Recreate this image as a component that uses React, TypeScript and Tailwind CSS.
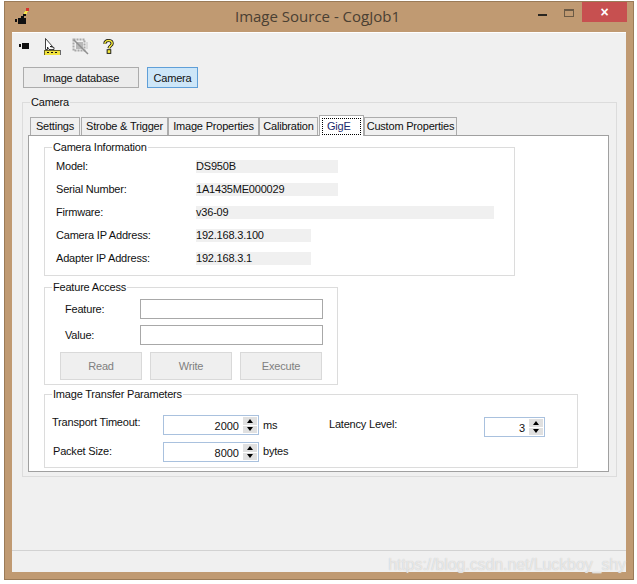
import React from "react";

const font = { fontFamily: '"Liberation Sans", Arial, sans-serif' };

const Group = ({ title, className, children }: { title: string; className: string; children: React.ReactNode }) => (
  <fieldset className={`border border-[#dcdcdc] ${className}`}>
    <legend className="ml-[7px] px-[1px] text-[11px] leading-[13px] text-[#111]">{title}</legend>
    {children}
  </fieldset>
);

const InfoRow = ({ label, value, barWidth }: { label: string; value: string; barWidth: string }) => (
  <div className="flex items-center h-[23px]">
    <div className="w-[151px] pl-[11px] text-[11px] text-[#111]">{label}</div>
    <div className={`h-[13px] bg-[#f0f0f0] text-[11px] leading-[13px] text-[#111] ${barWidth}`}>{value}</div>
  </div>
);

const Spin = ({ value, width }: { value: string; width: string }) => (
  <div className={`flex h-[20px] border border-[#a9c1de] bg-white ${width}`}>
    <div className="flex-1 pr-[4px] pt-[1px] text-right text-[11px] leading-[18px] tracking-normal text-[#111]">{value}</div>
    <div className="flex w-[15px] flex-col gap-[1px] p-[1px] pl-0">
      <div className="flex flex-1 items-center justify-center bg-[#e0e0e0]">
        <div className="h-0 w-0 border-x-[3.5px] border-b-[4px] border-x-transparent border-b-black" />
      </div>
      <div className="flex flex-1 items-center justify-center bg-[#e0e0e0]">
        <div className="h-0 w-0 border-x-[3.5px] border-t-[4px] border-x-transparent border-t-black" />
      </div>
    </div>
  </div>
);

const TabItem = ({ label, width }: { label: string; width: string }) => (
  <div className={`flex h-[18px] items-center justify-center whitespace-nowrap border border-b-0 border-[#acacac] bg-[#f0f0f0] text-[11px] text-[#111] ${width}`}>
    {label}
  </div>
);

const DisabledButton = ({ label }: { label: string }) => (
  <div className="flex h-[28px] w-[82px] items-center justify-center border border-[#d9d9d9] bg-[#efefef] text-[11px] text-[#808080]">
    {label}
  </div>
);

const TitleIcon = () => (
  <svg width="17" height="17" viewBox="0 0 17 17" shapeRendering="crispEdges">
    <rect x="0" y="11" width="2" height="3" fill="#111" />
    <rect x="3" y="10" width="8" height="6" fill="#111" />
    <rect x="6" y="8" width="3" height="3" fill="#111" />
    <rect x="8" y="6" width="3" height="2" fill="#111" />
    <rect x="9" y="4" width="3" height="2" fill="#f4e24a" />
    <rect x="10" y="3" width="3" height="1" fill="#f4e24a" />
    <rect x="11" y="0" width="3" height="3" fill="#d8322c" />
  </svg>
);

const CameraIcon = () => (
  <svg width="10" height="6" viewBox="0 0 10 6" shapeRendering="crispEdges">
    <rect x="0" y="1" width="2" height="3" fill="#111" />
    <rect x="3" y="0" width="7" height="6" fill="#111" />
  </svg>
);

const CursorRulerIcon = () => (
  <svg width="17" height="17" viewBox="0 0 17 17" shapeRendering="crispEdges">
    <path d="M1.5 0.5V11.5H3.5V9L5 11.5H10V9.5L6 8.5H8.5Z" fill="#fff" stroke="#111" strokeWidth="0.8" shapeRendering="auto" />
    <rect x="0" y="12" width="16" height="5" fill="#f2e33c" stroke="#111" strokeWidth="0.6" />
    <rect x="3" y="14" width="2" height="1" fill="#111" />
    <rect x="7" y="14" width="2" height="1" fill="#111" />
    <rect x="11" y="14" width="2" height="1" fill="#111" />
  </svg>
);

const CropIcon = () => (
  <svg width="17" height="17" viewBox="0 0 17 17">
    <rect x="1.5" y="1.5" width="11" height="11" fill="none" stroke="#a8a8a8" strokeWidth="2" strokeDasharray="2 1" />
    <rect x="4" y="4" width="7" height="7" fill="#b8b8b8" />
    <path d="M2 2L16 16" stroke="#8f8f8f" strokeWidth="1.5" />
    <path d="M15 4V11" stroke="#c4c4c4" strokeWidth="1" />
  </svg>
);

const HelpIcon = () => (
  <svg width="11" height="15" viewBox="0 0 12 16">
    <path d="M2 5C2 2.5 4 1.5 6 1.5C8 1.5 10 2.5 10 4.8C10 7 7 7 6.5 10" fill="none" stroke="#111" strokeWidth="3.4" />
    <path d="M2 5C2 2.5 4 1.5 6 1.5C8 1.5 10 2.5 10 4.8C10 7 7 7 6.5 10" fill="none" stroke="#f5e93a" strokeWidth="1.6" />
    <rect x="4.5" y="11.5" width="4" height="4" fill="#f5e93a" stroke="#111" />
  </svg>
);

export default function App() {
  return (
    <div className="h-[584px] w-[637px] overflow-hidden bg-white pl-[4px] pt-[1px] tracking-[-0.2px]" style={font}>
      <div className="flex h-[579px] w-[630px] flex-col border border-[#9b7b58] bg-[#c09a72] px-[7px] pb-[7px]">
        {/* title bar */}
        <div className="grid h-[30px] shrink-0 grid-cols-[1fr_auto_1fr] -mx-[7px]">
          <div className="pl-[10px] pt-[6px]">
            <TitleIcon />
          </div>
          <div
            className="pt-[3px] pr-[3px] text-[15px] leading-[22px] tracking-normal text-[#4a4033]"
            style={{ fontFamily: '"Open Sans", sans-serif' }}
          >
            Image Source - CogJob1
          </div>
          <div className="flex items-start justify-end pr-[6px]">
            <div className="mt-[12px] mr-[17px] h-[2px] w-[9px] bg-[#2a2620]" />
            <div className="mt-[7px] mr-[8px] h-[8px] w-[10px] border border-t-2 border-[#6b5a45]" />
            <div className="flex h-[20px] w-[45px] items-center justify-center bg-[#c75050] text-[14px] font-bold leading-none text-white">
              ×
            </div>
          </div>
        </div>

        {/* client area */}
        <div className="flex flex-1 flex-col border-t border-white bg-[#f0f0f0]">
          <div className="flex h-[23px] items-center pl-[7px] pt-[3px]">
            <div className="flex w-[25px]">
              <CameraIcon />
            </div>
            <div className="flex w-[28px]">
              <CursorRulerIcon />
            </div>
            <div className="flex w-[31px]">
              <CropIcon />
            </div>
            <HelpIcon />
          </div>

          <div className="mt-[11px] flex gap-[8px] pl-[11px]">
            <div className="flex h-[21px] w-[116px] items-center justify-center border border-[#acacac] bg-[#ececec] pt-px text-[11px] text-[#111]">
              Image database
            </div>
            <div className="flex h-[21px] w-[51px] items-center justify-center border border-[#5f9fd8] bg-[#cde6f8] pt-px text-[11px] text-[#111]">
              Camera
            </div>
          </div>

          <Group title="Camera" className="ml-[10px] mt-[8px] h-[381px] w-[595px]">
            <div className="pl-[5px]">
              <div className="flex h-[26px] items-end pl-[2px]">
                <TabItem label="Settings" width="w-[50px]" />
                <div className="w-px" />
                <TabItem label="Strobe & Trigger" width="w-[87px]" />
                <TabItem label="Image Properties" width="w-[91px]" />
                <TabItem label="Calibration" width="w-[59px]" />
                <div className="w-px" />
                <div className="z-10 -mb-px flex h-[21px] w-[45px] items-center justify-center border border-b-0 border-[#acacac] bg-white text-[11px] text-[#1a2a6c]">
                  <span className="w-[39px] border border-dotted border-black pl-[4px] leading-[15px]">GigE</span>
                </div>
                <TabItem label="Custom Properties" width="w-[93px]" />
              </div>

              {/* tab page */}
              <div className="h-[337px] w-[581px] border border-[#a0a0a0] bg-white pl-[15px] pt-[5px]">
                <Group title="Camera Information" className="h-[135px] w-[471px]">
                  <div className="pt-[1px]">
                    <InfoRow label="Model:" value="DS950B" barWidth="w-[142px]" />
                    <InfoRow label="Serial Number:" value="1A1435ME000029" barWidth="w-[142px]" />
                    <InfoRow label="Firmware:" value="v36-09" barWidth="w-[298px]" />
                    <InfoRow label="Camera IP Address:" value="192.168.3.100" barWidth="w-[115px]" />
                    <InfoRow label="Adapter IP Address:" value="192.168.3.1" barWidth="w-[115px]" />
                  </div>
                </Group>

                <Group title="Feature Access" className="mt-[5px] h-[104px] w-[294px]">
                  <div className="pl-[20px] pt-[5px]">
                    <div className="flex h-[20px] items-center">
                      <div className="w-[75px] text-[11px] text-[#111]">Feature:</div>
                      <div className="h-[20px] w-[183px] border border-[#a8a8a8] bg-white" />
                    </div>
                    <div className="mt-[6px] flex h-[20px] items-center">
                      <div className="w-[75px] text-[11px] text-[#111]">Value:</div>
                      <div className="h-[20px] w-[183px] border border-[#a8a8a8] bg-white" />
                    </div>
                  </div>
                  <div className="mt-[7px] flex gap-[8px] pl-[15px]">
                    <DisabledButton label="Read" />
                    <DisabledButton label="Write" />
                    <DisabledButton label="Execute" />
                  </div>
                </Group>

                <Group title="Image Transfer Parameters" className="mt-[3px] h-[80px] w-[534px]">
                  <div className="flex">
                    <div className="w-[284px] pl-[7px]">
                      <div className="flex pt-[14px]">
                        <div className="w-[111px] text-[11px] leading-[14px] text-[#111]">Transport Timeout:</div>
                        <Spin value="2000" width="w-[96px]" />
                        <div className="ml-[4px] pt-[3px] text-[11px] leading-[14px] text-[#111]">ms</div>
                      </div>
                      <div className="flex pt-[7px]">
                        <div className="w-[111px] pl-px pt-[2px] text-[11px] leading-[14px] text-[#111]">Packet Size:</div>
                        <Spin value="8000" width="w-[96px]" />
                        <div className="ml-[4px] pt-[2px] text-[11px] leading-[14px] text-[#111]">bytes</div>
                      </div>
                    </div>
                    <div className="flex pt-[16px]">
                      <div className="w-[155px] text-[11px] leading-[14px] text-[#111]">Latency Level:</div>
                      <Spin value="3" width="w-[61px]" />
                    </div>
                  </div>
                </Group>
              </div>
            </div>
          </Group>

          {/* status strip */}
          <div className="mt-auto flex h-[22px] justify-end border-t border-[#d2d2d2] pt-[5px]">
            <span className="text-[16px] leading-[18px] tracking-[-0.1px] text-white/60 [text-shadow:0_0_1px_#bbb]">
              https://blog.csdn.net/Luckboy_shy
            </span>
          </div>
        </div>
      </div>
    </div>
  );
}
